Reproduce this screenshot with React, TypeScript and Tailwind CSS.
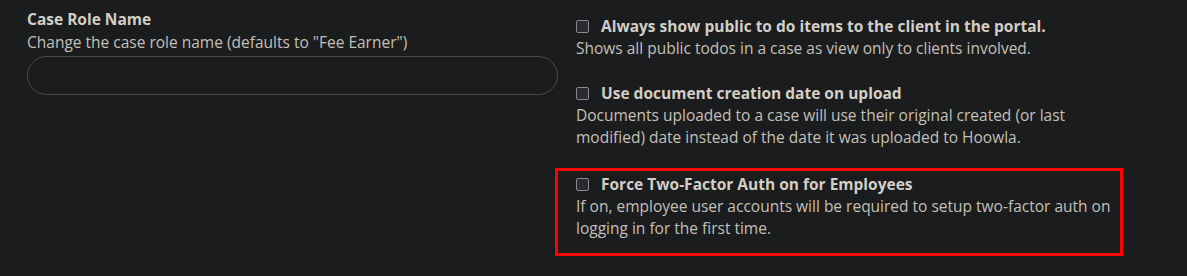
import React from 'react';

const font = { fontFamily: '"Open Sans", "Noto Sans", sans-serif' };

function Checkbox() {
  return (
    <span className="mt-[5px] inline-block size-[13px] shrink-0 rounded-[2px] border border-[#8a8a92] bg-[#2a2a33]" />
  );
}

function Option({ label, children }: { label: string; children: React.ReactNode }) {
  return (
    <div>
      <div className="flex items-start gap-[12px]">
        <Checkbox />
        <span className="font-bold text-[#d3cec6]">{label}</span>
      </div>
      <p className="text-[#c4c0b8]">{children}</p>
    </div>
  );
}

export default function App() {
  return (
    <div
      className="flex h-[276px] w-[1187px] bg-[#1b1c1e] pt-[8px] text-[15.5px] leading-[22px]"
      style={font}
    >
      <div className="ml-[27px] w-[531px]">
        <label className="block font-bold text-[#d3cec6]">Case Role Name</label>
        <p className="mt-[1px] text-[#c4c0b8]">Change the case role name (defaults to "Fee Earner")</p>
        <input
          type="text"
          className="mt-[3px] h-[39px] w-full rounded-[20px] border border-[#4a4b4e] bg-transparent px-4 text-[#d3cec6] outline-none"
        />
      </div>

      <div className="ml-[18px] flex w-[570px] flex-col">
        <div className="pt-[7px]">
          <Option label="Always show public to do items to the client in the portal.">
            Shows all public todos in a case as view only to clients involved.
          </Option>
        </div>
        <div className="mt-[23px]">
          <Option label="Use document creation date on upload">
            Documents uploaded to a case will use their original created (or last
            <br />
            modified) date instead of the date it was uploaded to Hoowla.
          </Option>
        </div>
        <div className="ml-[-21px] mt-[20px] w-[568px] border-[3px] border-[#ff0000] pb-[14px] pl-[18px] pt-[2px]">
          <Option label="Force Two-Factor Auth on for Employees">
            If on, employee user accounts will be required to setup two-factor auth on
            <br />
            logging in for the first time.
          </Option>
        </div>
      </div>
    </div>
  );
}
